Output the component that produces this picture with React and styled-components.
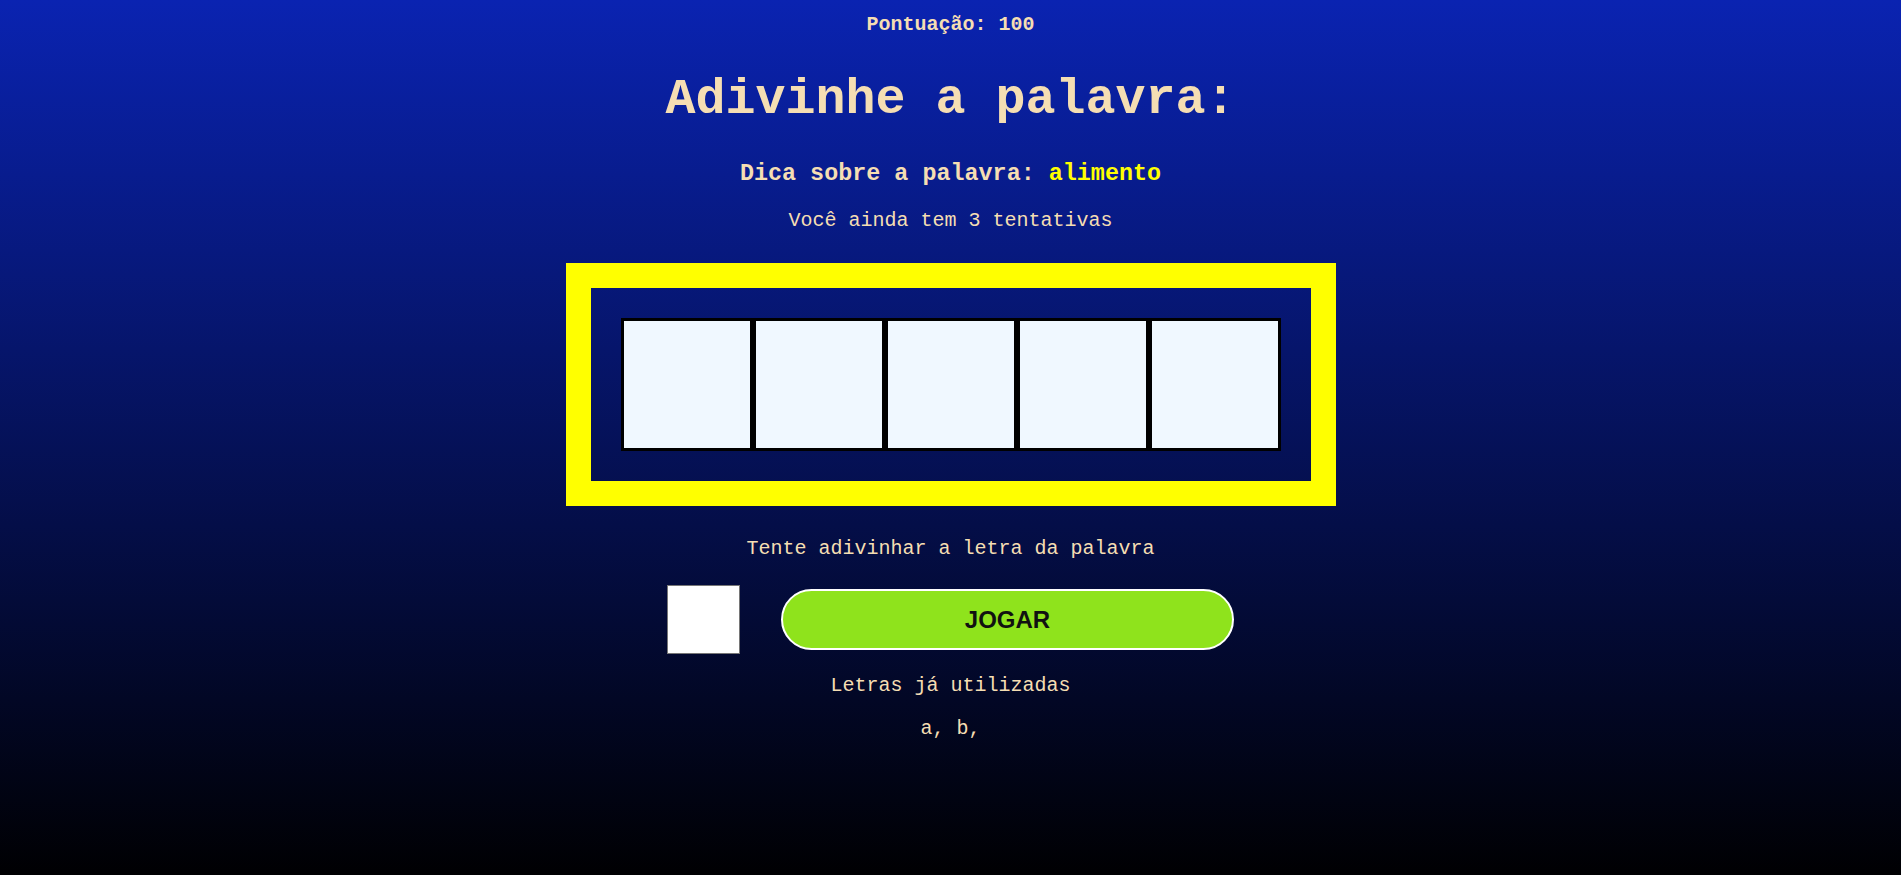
import styled, { createGlobalStyle } from 'styled-components';

const GlobalStyle = createGlobalStyle`
  html, body {
    margin: 0;
    padding: 0;
  }
  body {
    font-family: 'Liberation Mono', 'Courier New', monospace;
    background: #000;
  }
`;

const Page = styled.div`
  min-height: 100vh;
  display: flex;
  flex-direction: column;
  align-items: center;
  background: linear-gradient(to bottom, #0a23b1, #000002);
  color: wheat;
  text-align: center;
`;

const Score = styled.p`
  margin: 0;
  padding-top: 13px;
  font-size: 20px;
  line-height: 24px;
  font-weight: bold;
`;

const Title = styled.h1`
  margin: 33px 0 0;
  font-size: 50px;
  line-height: 60px;
  font-weight: bold;
`;

const Hint = styled.h3`
  margin: 30px 0 0;
  font-size: 23.4px;
  line-height: 28px;
  font-weight: bold;
`;

const HintWord = styled.span`
  color: #ffff00;
`;

const Line = styled.p`
  margin: ${(p) => p.$top}px 0 0;
  font-size: 20px;
  line-height: 24px;
`;

const Board = styled.div`
  margin-top: 30px;
  border: 25px solid #ffff00;
  padding: 30px;
  display: flex;
`;

const LetterBox = styled.div`
  width: 126px;
  height: 127px;
  border: 3px solid #000;
  background: aliceblue;
`;

const GuessRow = styled.form`
  margin-top: 24px;
  display: flex;
  align-items: center;
  gap: 41px;
`;

const LetterInput = styled.input`
  box-sizing: border-box;
  width: 73px;
  height: 69px;
  border: 1px solid #767676;
  background: #fff;
  font-size: 32px;
  text-align: center;
  outline: none;
`;

const PlayButton = styled.button`
  box-sizing: border-box;
  width: 453px;
  height: 61px;
  border: 2px solid #fff;
  border-radius: 31px;
  background: #8fe31c;
  color: #111;
  font-family: 'Liberation Sans', Arial, sans-serif;
  font-size: 24px;
  font-weight: bold;
  cursor: pointer;
`;

const word = ['', '', '', '', ''];
const usedLetters = ['a', 'b'];

const App = () => {
  return (
    <>
      <GlobalStyle />
      <Page>
        <Score>Pontuação: 100</Score>
        <Title>Adivinhe a palavra:</Title>
        <Hint>
          Dica sobre a palavra: <HintWord>alimento</HintWord>
        </Hint>
        <Line $top={21}>Você ainda tem 3 tentativas</Line>
        <Board>
          {word.map((letter, i) => (
            <LetterBox key={i}>{letter}</LetterBox>
          ))}
        </Board>
        <Line $top={31}>Tente adivinhar a letra da palavra</Line>
        <GuessRow onSubmit={(e) => e.preventDefault()}>
          <LetterInput type='text' name='letter' maxLength={1} />
          <PlayButton type='submit'>JOGAR</PlayButton>
        </GuessRow>
        <Line $top={20}>Letras já utilizadas</Line>
        <Line $top={19}>
          {usedLetters.map((l) => `${l}, `).join('')}
        </Line>
      </Page>
    </>
  );
};

export default App;
